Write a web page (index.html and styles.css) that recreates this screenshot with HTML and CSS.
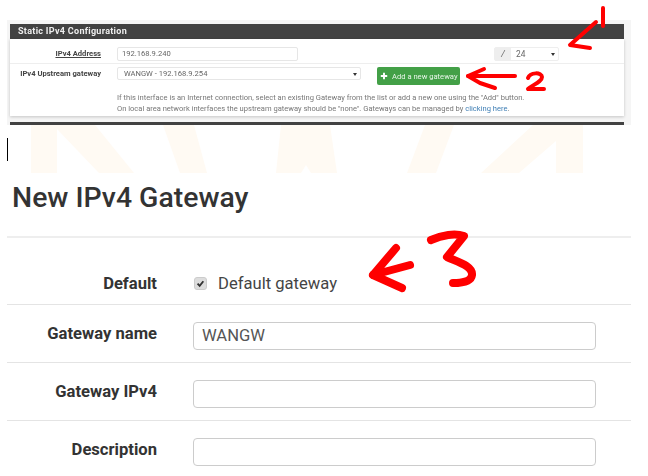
FILE: index.html
```html
<!DOCTYPE html>
<html lang="en">
<head>
  <meta charset="UTF-8" />
  <title>New IPv4 Gateway</title>
  <link rel="stylesheet" href="styles.css">
</head>
<body>

  <!-- top screenshot: static ipv4 panel -->
  <div class="panel">
    <div class="panel-head">Static IPv4 Configuration</div>
    <div class="panel-body">
      <div class="cfg-row cfg-first">
        <div class="cfg-label"><u>IPv4 Address</u></div>
        <div class="cfg-input">192.168.9.240</div>
        <div class="mask">
          <span class="mask-slash">/</span>
          <span class="mask-val">24<i class="caret"></i></span>
        </div>
      </div>
      <div class="cfg-row cfg-second">
        <div class="cfg-label">IPv4 Upstream gateway</div>
        <div class="cfg-select">WANGW - 192.168.9.254<i class="caret"></i></div>
        <div class="add-btn">
          <svg class="plus" viewBox="0 0 10 10"><path d="M5 1v8M1 5h8"></path></svg>
          Add a new gateway
        </div>
      </div>
      <div class="cfg-help">
        If this interface is an Internet connection, select an existing Gateway from the list or add a new one using the "Add" button.<br>
        On local area network interfaces the upstream gateway should be "none". Gateways can be managed by <a href="#">clicking here</a>.
      </div>
    </div>
    <div class="panel-next"></div>
  </div>

  <div class="gap-strip">
    <span class="cursor"></span>
    <svg class="watermark" viewBox="0 0 648 48">
      <path d="M31 0H95L134 48H99L57 4V48H31z"></path>
      <path d="M163 0H194L207 48H180z"></path>
      <path d="M281 0H330L337 48H311L306 40L301 48H276z"></path>
      <path d="M425 0H454L436 48H407z"></path>
      <path d="M533 0H583V48H556V16L519 48H481z"></path>
    </svg>
  </div>

  <!-- bottom screenshot: gateway form -->
  <h1 class="title">New IPv4 Gateway</h1>

  <div class="form">
    <div class="form-row form-check">
      <div class="form-label">Default</div>
      <div class="form-field">
        <span class="check"><svg viewBox="0 0 12 12"><path d="M2.8 6.2l2.3 2.4 4-5"></path></svg></span>
        <span class="check-text">Default gateway</span>
      </div>
    </div>
    <div class="form-row">
      <div class="form-label">Gateway name</div>
      <div class="form-field form-input"><div class="text-input">WANGW</div></div>
    </div>
    <div class="form-row">
      <div class="form-label">Gateway IPv4</div>
      <div class="form-field form-input"><div class="text-input"></div></div>
    </div>
    <div class="form-row">
      <div class="form-label">Description</div>
      <div class="form-field form-input"><div class="text-input"></div></div>
    </div>
  </div>

  <!-- red marker scribbles on top of everything -->
  <svg class="marks" viewBox="0 0 648 476">
    <g class="thin">
      <path d="M603 8L603 26"></path>
      <path d="M596 22L570 45L590 48"></path>
      <path d="M515 76L468 76"></path>
      <path d="M484 69L468 76L480 83L495 88"></path>
      <path d="M528 78C530 72 542 72 542 77C542 82 532 85 528 89L544 89"></path>
    </g>
    <g class="thick">
      <path d="M396 248L373 275L410 265"></path>
      <path d="M373 275L402 288"></path>
      <path d="M431 240C442 235 455 233 464 236L447 257C458 262 473 266 472 275C471 283 458 283 453 283"></path>
    </g>
  </svg>

</body>
</html>
```

FILE: styles.css
```css
body {
  margin: 0;
  width: 648px;
  height: 476px;
  overflow: hidden;
  position: relative;
  background-color: #fff;
  font-family: Roboto, sans-serif;
  color: #333;
}

.panel {
  margin: 20px 17px 0 7px;
  padding: 4px 7px 0 3px;
  height: 105px;
  box-sizing: border-box;
  background-color: #f5f5f5;
  overflow: hidden;
  filter: blur(0.45px);
}

.panel-head {
  height: 15px;
  line-height: 15px;
  padding-left: 8px;
  background-color: #424242;
  color: #eee;
  font-size: 9px;
  font-weight: 700;
  letter-spacing: 0.3px;
}

.panel-body {
  height: 77px;
  background-color: #fff;
  box-shadow: 0 1px 3px rgba(0,0,0,0.2);
  font-size: 7.6px;
}

.cfg-row {
  display: flex;
  align-items: flex-start;
}

.cfg-first {
  height: 25px;
  padding-top: 8px;
  border-bottom: 1px solid #eee;
  box-sizing: border-box;
}

.cfg-second {
  height: 28px;
  padding-top: 3px;
  box-sizing: border-box;
}

.cfg-label {
  width: 91px;
  text-align: right;
  font-weight: 700;
  color: #444;
  line-height: 13px;
  flex-shrink: 0;
}

.cfg-input {
  width: 181px;
  height: 14px;
  margin-left: 16px;
  padding-left: 4px;
  box-sizing: border-box;
  border: 1px solid #e6e6e6;
  border-radius: 2px;
  line-height: 12px;
  color: #666;
}

.mask {
  display: flex;
  height: 14px;
  margin-left: 196px;
  border: 1px solid #eee;
  border-radius: 2px;
  box-sizing: border-box;
  line-height: 12px;
  color: #666;
}

.mask-slash {
  width: 16px;
  text-align: center;
  background-color: #eee;
  font-style: italic;
  font-size: 9px;
}

.mask-val {
  position: relative;
  width: 47px;
  padding-left: 5px;
  box-sizing: border-box;
  font-size: 8.4px;
}

.caret {
  position: absolute;
  right: 3px;
  top: 5px;
  border-left: 2px solid transparent;
  border-right: 2px solid transparent;
  border-top: 3px solid #333;
}

.cfg-select {
  position: relative;
  width: 244px;
  height: 13px;
  margin-left: 16px;
  padding-left: 6px;
  box-sizing: border-box;
  border: 1px solid #e6e6e6;
  border-radius: 2px;
  line-height: 11px;
  color: #666;
}

.add-btn {
  display: flex;
  align-items: center;
  gap: 4px;
  width: 83px;
  height: 18px;
  margin-left: 16px;
  padding-left: 3px;
  box-sizing: border-box;
  background-color: #43a047;
  border-radius: 2px;
  color: #e8f5e9;
  white-space: nowrap;
}

.plus {
  width: 8px;
  height: 8px;
  flex-shrink: 0;
  fill: none;
  stroke: #fff;
  stroke-width: 2.4;
}

.cfg-help {
  margin-left: 107px;
  line-height: 11px;
  font-size: 7.55px;
  color: #777;
}

.cfg-help a {
  color: #3f7fb5;
  text-decoration: none;
}

.panel-next {
  height: 4px;
  margin-top: 6px;
  background-color: #424242;
}

.gap-strip {
  position: relative;
  height: 57px;
}

.cursor {
  position: absolute;
  left: 7px;
  top: 13px;
  width: 1px;
  height: 23px;
  background-color: #000;
}

.watermark {
  position: absolute;
  left: 0;
  top: 0;
  width: 648px;
  height: 48px;
  fill: #fffaf3;
}

.title {
  margin: 0 0 0 12px;
  font-size: 28.4px;
  line-height: 32px;
  font-weight: 500;
  color: #333;
}

.form {
  margin: 22px 17px 0 7px;
  border-top: 2px solid #eee;
}

.form-row {
  display: flex;
  align-items: center;
  height: 57px;
  border-bottom: 1px solid #e4e4e4;
}

.form-check {
  height: 42px;
  padding-top: 24px;
}

.form-label {
  width: 150px;
  text-align: right;
  font-size: 16.6px;
  font-weight: 700;
  color: #333;
}

.form-field {
  display: flex;
  align-items: center;
  margin-left: 36px;
  flex: 1;
}

.form-input {
  margin-top: 5px;
}

.check {
  width: 13px;
  height: 13px;
  margin-left: 1px;
  background-color: #ddd;
  border-radius: 3px;
  border: 1px solid #ccc;
  box-sizing: border-box;
}

.check svg {
  display: block;
  fill: none;
  stroke: #333;
  stroke-width: 2;
}

.check-text {
  margin-left: 11px;
  font-size: 16.6px;
  color: #444;
}

.text-input {
  width: 403px;
  height: 28px;
  padding-left: 8px;
  box-sizing: border-box;
  border: 1px solid #ccc;
  border-radius: 4px;
  line-height: 26px;
  font-size: 16.6px;
  color: #555;
}

.marks {
  position: absolute;
  left: 0;
  top: 0;
  width: 648px;
  height: 476px;
  fill: none;
  stroke: #f00;
  stroke-linecap: round;
  stroke-linejoin: round;
}

.thin {
  stroke-width: 4;
}

.thick {
  stroke-width: 8;
}
```
